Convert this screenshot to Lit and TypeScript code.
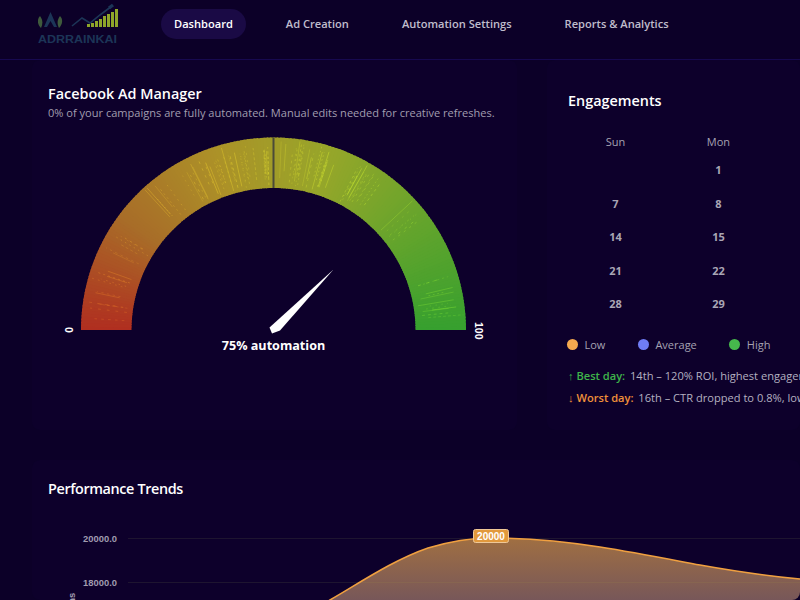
import { LitElement, html, css, svg } from "lit";
import { customElement } from "lit/decorators.js";

const CX = 225.5, CY = 205, RO = 192.5, RI = 142;
const STOPS = [[176, 46, 32], [168, 108, 40], [172, 146, 40], [150, 166, 42], [100, 164, 44], [54, 160, 47]];

function colorAt(t: number, k = 0): string {
  const p = Math.min(0.9999, t) * (STOPS.length - 1);
  const seg = Math.floor(p);
  const f = p - seg;
  const a = STOPS[seg], b = STOPS[seg + 1];
  const c = a.map((v, i) => Math.min(255, Math.round(v + (b[i] - v) * f + (i === 2 ? k * 0.1 : k))));
  return `rgb(${c.join(",")})`;
}
function pt(r: number, t: number) {
  const ang = Math.PI * (1 - t);
  return [CX + r * Math.cos(ang), CY - r * Math.sin(ang)];
}
function wedge(t0: number, t1: number) {
  const [a, b] = pt(RO, t0), [c, d] = pt(RO, t1), [e, f] = pt(RI, t1), [g, h] = pt(RI, t0);
  return `M${a} ${b}A${RO} ${RO} 0 0 1 ${c} ${d}L${e} ${f}A${RI} ${RI} 0 0 0 ${g} ${h}Z`;
}

const N = 180;
const wedges = Array.from({ length: N }, (_, i) =>
  svg`<path d=${wedge(i / N, Math.min(1, (i + 1.4) / N))} fill=${colorAt((i + 0.5) / N)}></path>`
);

let seed = 71;
const rnd = () => ((seed = (seed * 16807) % 2147483647) / 2147483647);
const bands: [number, number, number][] = [
  [0.02, 0.11, 12], [0.14, 0.18, 6], [0.24, 0.3, 6], [0.32, 0.44, 20], [0.44, 0.497, 14],
  [0.505, 0.62, 24], [0.64, 0.72, 16], [0.75, 0.8, 6], [0.9, 0.985, 12],
];
const streaks = bands.flatMap(([a, b, n]) =>
  Array.from({ length: n }, () => {
    const t = a + (b - a) * rnd();
    const r0 = RI + 2 + rnd() * 16, r1 = RO - 2 - rnd() * 16;
    const [x1, y1] = pt(r0, t), [x2, y2] = pt(r1, t);
    const dash = rnd() > 0.7 ? "none" : `${1 + rnd() * 2} ${2 + rnd() * 4}`;
    return svg`<line x1=${x1} y1=${y1} x2=${x2} y2=${y2} stroke=${colorAt(t, 58)} stroke-width="0.7" stroke-dasharray=${dash} opacity=${0.35 + rnd() * 0.4}></line>`;
  })
);

const CURVE = "M270 108 L282 100 C310 84 345 60 380 48 C400 42 420 38 442 38 C480 38 520 42 552 47 C590 53 625 60 652 65 C680 70 720 76 752 79";

const weeks = [["", "1"], ["7", "8"], ["14", "15"], ["21", "22"], ["28", "29"]];

@customElement("app-root")
export class AppRoot extends LitElement {
  static styles = css`
    :host {
      display: block;
      width: 800px;
      height: 600px;
      overflow: hidden;
      background: #0c0028;
      color: #fff;
      font-family: "Open Sans", "Noto Sans", sans-serif;
    }
    header {
      display: flex;
      align-items: center;
      height: 59px;
      padding: 0 0 11px 38px;
      gap: 43px;
      box-sizing: border-box;
    }
    .logo { width: 80px; height: 46px; display: block; flex: none; }
    .logo text { font: 700 11px "Liberation Sans", sans-serif; fill: #1c3557; }
    nav { display: flex; gap: 27px; }
    nav a {
      padding: 0 13px;
      height: 30px;
      line-height: 30px;
      border-radius: 15px;
      font-size: 11.1px;
      font-weight: 600;
      color: #c0bdcc;
      white-space: nowrap;
    }
    nav a.on { background: #1a0a45; color: #fff; }
    .row {
      display: flex;
      gap: 30px;
      padding: 0 0 0 32px;
      border-top: 1px solid #170950;
      overflow: hidden;
    }
    .card { background: #0d002b; border-radius: 8px; box-sizing: border-box; }
    .gauge-card { flex: none; width: 485px; height: 370px; padding: 24px 16px 0; }
    h2 { margin: 0; font-size: 14.4px; line-height: 20px; font-weight: 600; color: #fff; }
    .sub { margin: 1px 0 0; font-size: 11.05px; line-height: 16px; color: #a19eaf; white-space: nowrap; }
    .gauge { display: block; width: 453px; height: 240px; margin-top: 4px; }
    .gauge .end { font: 700 10.5px "Liberation Sans", sans-serif; fill: #fff; }
    .gauge .val { font-size: 12.6px; font-weight: 700; fill: #fff; }
    .eng-card { flex: none; width: 253px; height: 370px; padding: 31px 0 0 21px; overflow: hidden; }
    table { border-collapse: collapse; table-layout: fixed; width: 206px; margin: 18px 0 0 -4px; }
    th { height: 24px; font-size: 11px; font-weight: 400; color: #a5a2b2; padding: 0; }
    td { height: 33.5px; font-size: 11px; font-weight: 700; color: #a9a6b5; text-align: center; padding: 0; }
    .legend { display: flex; align-items: center; margin: 16px 0 0 -1px; font-size: 11px; color: #a5a2b2; height: 16px; }
    .legend i { flex: none; width: 11px; height: 11px; border-radius: 50%; margin-right: 6.5px; }
    .legend span { margin-right: 32.5px; }
    .note { margin: 0; font-size: 11.1px; line-height: 22px; color: #b4b1c0; white-space: nowrap; }
    .legend + .note { margin-top: 12px; }
    .note b { font-weight: 600; margin-right: 2px; }
    .good { color: #3fb54a; }
    .bad { color: #f0913a; }
    .trend-card { margin: 30px 0 0 32px; width: 768px; height: 140px; padding: 19px 0 0 16px; overflow: hidden; }
    .trend-card h2 { letter-spacing: -0.38px; }
    .trend { display: block; width: 752px; height: 100px; margin-top: 1px; }
    .trend .tick { font: 700 9.4px "Liberation Sans", sans-serif; fill: #a09cb0; }
    .trend .tag { font: 700 10px "Liberation Sans", sans-serif; fill: #fff; }
  `;

  render() {
    return html`
      <header>
        <svg class="logo" viewBox="0 0 80 46">
          <path d="M12.5 11 L19 26 L16 26 L12.5 20 L9 26 L6 26 Z" fill="#1c3557"></path>
          <path d="M2 15 C-1 18 -1 23 3 27 C5 23 5 19 2 15 Z" fill="#3f5a3c"></path>
          <path d="M22 15 C25 18 25 23 21 27 C19 23 19 19 22 15 Z" fill="#3f5a3c"></path>
          <path d="M34 25 L44 17 L52 22 L62 14 L74 5" fill="none" stroke="#1c3557" stroke-width="1.6"></path>
          <path d="M71 7 L75 4" fill="none" stroke="#1c3557" stroke-width="3.4"></path>
          <g fill="#8ea52a">
            <rect x="49" y="23" width="3" height="3"></rect><rect x="53" y="22" width="3" height="4"></rect>
            <rect x="57" y="20" width="3" height="6"></rect><rect x="61" y="18" width="3" height="8"></rect>
            <rect x="65" y="15" width="3" height="11"></rect><rect x="69" y="13" width="3" height="13"></rect>
            <rect x="73" y="11" width="3" height="15"></rect><rect x="77" y="8" width="3" height="18"></rect>
          </g>
          <text x="0" y="42" textLength="79" lengthAdjust="spacingAndGlyphs">ADRRAINKAI</text>
        </svg>
        <nav>
          <a class="on">Dashboard</a><a>Ad Creation</a><a>Automation Settings</a><a>Reports &amp; Analytics</a>
        </nav>
      </header>
      <div class="row">
        <section class="card gauge-card">
          <h2>Facebook Ad Manager</h2>
          <p class="sub">0% of your campaigns are fully automated. Manual edits needed for creative refreshes.</p>
          <svg class="gauge" viewBox="0 0 453 240">
            ${wedges}${streaks}
            <rect x=${CX - 1} y=${CY - RO} width="2" height=${RO - RI} fill="#4a4a38"></rect>
            <text class="end" transform="translate(17 202) rotate(90)">0</text>
            <text class="end" transform="translate(427 197) rotate(90)">100</text>
            <path d="M285.5 144.5 L221.5 202.5 L224 208.5 L232 205.5 Z" fill="#fff"></path>
            <text class="val" x=${CX} y="225" text-anchor="middle">75% automation</text>
          </svg>
        </section>
        <section class="card eng-card">
          <h2>Engagements</h2>
          <table>
            <thead><tr><th>Sun</th><th>Mon</th></tr></thead>
            <tbody>${weeks.map((w) => html`<tr>${w.map((d) => html`<td>${d}</td>`)}</tr>`)}</tbody>
          </table>
          <div class="legend">
            <i style="background:#f5a94f"></i><span>Low</span>
            <i style="background:#6f7cf5"></i><span>Average</span>
            <i style="background:#46b84c"></i><span>High</span>
          </div>
          <p class="note"><b class="good">↑ Best day:</b> 14th – 120% ROI, highest engagement</p>
          <p class="note"><b class="bad">↓ Worst day:</b> 16th – CTR dropped to 0.8%, low</p>
        </section>
      </div>
      <section class="card trend-card">
        <h2>Performance Trends</h2>
        <svg class="trend" viewBox="0 0 752 100">
          <defs>
            <linearGradient id="area" x1="0" y1="0" x2="0" y2="1">
              <stop offset="0" stop-color="#a06f42"></stop>
              <stop offset="1" stop-color="#72545c"></stop>
            </linearGradient>
          </defs>
          <text class="tick" x="69" y="42" text-anchor="end">20000.0</text>
          <text class="tick" x="69" y="86" text-anchor="end">18000.0</text>
          <text class="tick" transform="translate(27 148) rotate(-90)">Impressions</text>
          <line x1="80" y1="38.5" x2="752" y2="38.5" stroke="#1e1530"></line>
          <line x1="80" y1="82.5" x2="752" y2="82.5" stroke="#1e1530"></line>
          <path d=${CURVE + " V108 H270 Z"} fill="url(#area)"></path>
          <line x1="310" y1="82.5" x2="752" y2="82.5" stroke="#8b6a50" opacity="0.6"></line>
          <path d=${CURVE} fill="none" stroke="#f0a040" stroke-width="1.6"></path>
          <rect x="425.5" y="29.5" width="35" height="13" rx="2" fill="#e2993c" stroke="#efc898"></rect>
          <text class="tag" x="443" y="40" text-anchor="middle">20000</text>
        </svg>
      </section>
    `;
  }
}
